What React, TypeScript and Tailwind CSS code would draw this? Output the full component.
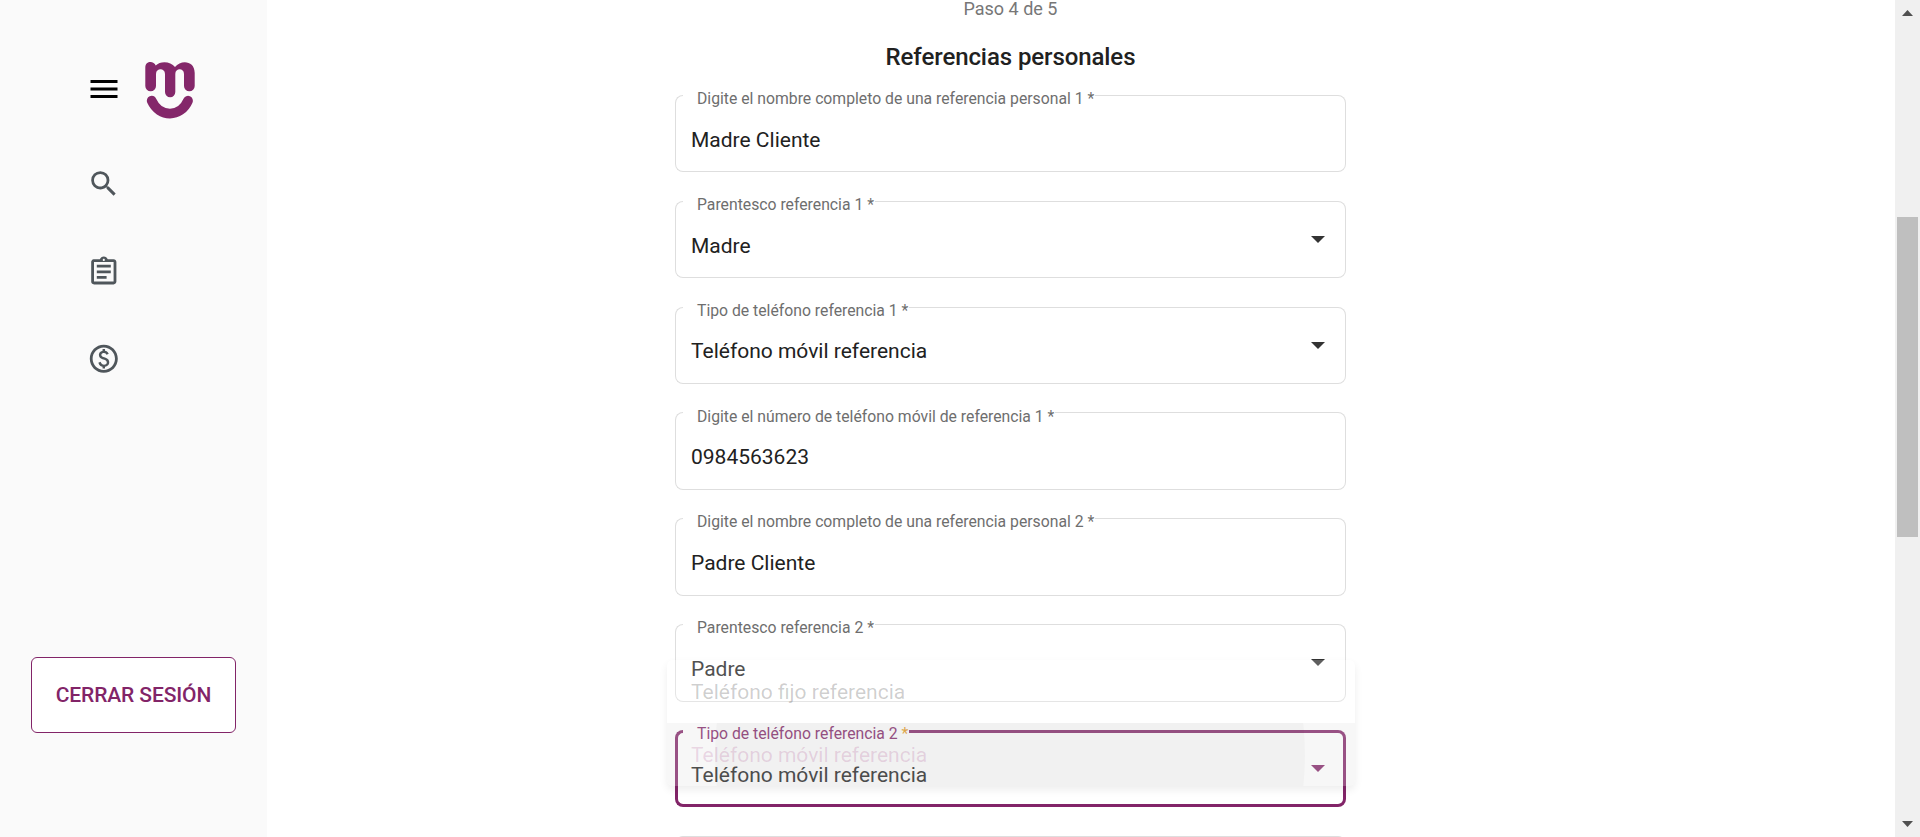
import React from "react";
import { MdMenu, MdSearch, MdOutlineAssignment, MdOutlinePaid } from "react-icons/md";

type FieldProps = {
  label?: string;
  value?: string;
  select?: boolean;
  active?: boolean;
};

function Field({ label, value, select, active }: FieldProps) {
  const line = active ? "border-[#822468]" : "border-[#dedede]";
  return (
    <div className="h-[105.83px] shrink-0">
      <div className="relative flex h-[77.55px] items-center justify-between">
        <div className="absolute inset-0 flex">
          <div className={`w-2 rounded-l-lg border-r-0 ${active ? "border-3" : "border"} ${line}`} />
          {label && (
            <div className={`border-t-0 pr-px pl-[14px] ${active ? "border-b-3" : "border-b"} ${line}`}>
              <span
                className={`relative -top-[7.8px] block text-[15.75px] leading-6 whitespace-nowrap ${active ? "text-[#822468]" : "text-[#6e6e6e]"}`}
              >
                {label}
                <span className={active ? "text-[#e69a18]" : ""}> *</span>
              </span>
            </div>
          )}
          <div className={`flex-1 rounded-r-lg border-l-0 ${active ? "border-3" : "border"} ${line}`} />
        </div>
        <span className="mt-[12.1px] pl-4 text-[21px] leading-6 text-[#212121]">{value}</span>
        {select && (
          <svg
            width="14"
            height="7"
            viewBox="0 0 14 7"
            className={`mr-[21px] ${active ? "fill-[#822468]" : "fill-[#333333]"}`}
          >
            <path d="M0 0h14L7 7z" />
          </svg>
        )}
      </div>
    </div>
  );
}

function Logo() {
  return (
    <svg width="50" height="58" viewBox="0 0 50 58">
      <path
        fill="#84276a"
        d="M.3 6.5C.3-.5 9-.5 10.700 4.500C15-.2 25.500-.2 30 6C36-1.500 49.700-.5 49.700 12V25A5.350 5.350 0 0 1 39 25V13C39 6.800 30.300 6.800 30.300 13V31A5.150 5.150 0 0 1 20 31V13C20 6.800 11 6.800 11 13V25A5.350 5.350 0 0 1 .3 25Z"
      />
      <path
        d="M6.700 39.700C14.500 56.800 35.500 56.800 43 39.700"
        fill="none"
        stroke="#84276a"
        strokeWidth="9.800"
        strokeLinecap="round"
      />
    </svg>
  );
}

export default function App() {
  return (
    <div className="flex h-[837px] w-full overflow-hidden bg-white font-[Roboto,sans-serif]">
      <aside className="flex w-[267px] shrink-0 flex-col bg-[#fafafa]">
        <div className="mt-[61px] flex h-[58px] items-center pl-[86px]">
          <MdMenu size={36} color="#000" className="mb-[2px]" />
          <div className="ml-[23px]">
            <Logo />
          </div>
        </div>
        <nav className="mt-[48.4px] flex flex-col gap-[53.9px] pl-[87px] text-[#4f565b]">
          <MdSearch size={33.6} />
          <MdOutlineAssignment size={33.6} />
          <MdOutlinePaid size={33.6} />
        </nav>
        <button className="mt-auto mb-[104px] ml-[31px] h-[76px] w-[205px] rounded-md border border-[#822468] bg-white pt-[2px] text-[21px] font-medium tracking-[-0.12px] text-[#822468]">
          CERRAR SESIÓN
        </button>
      </aside>
      <main className="flex flex-1 overflow-hidden pl-[408px]">
        <div className="relative flex h-[941.54px] w-[671px] shrink-0 flex-col">
          <p className="mt-[-3px] text-center text-[18px] leading-6 text-[#777]">Paso 4 de 5</p>
          <h1 className="mt-[20px] h-[53.9px] shrink-0 text-center text-2xl font-medium tracking-[-0.09px] text-[#212121]">
            Referencias personales
          </h1>
          <Field label="Digite el nombre completo de una referencia personal 1" value="Madre Cliente" />
          <Field label="Parentesco referencia 1" value="Madre" select />
          <Field label="Tipo de teléfono referencia 1" value="Teléfono móvil referencia" select />
          <Field label="Digite el número de teléfono móvil de referencia 1" value="0984563623" />
          <Field label="Digite el nombre completo de una referencia personal 2" value="Padre Cliente" />
          <Field label="Parentesco referencia 2" value="Padre" select />
          <Field label="Tipo de teléfono referencia 2" value="Teléfono móvil referencia" select active />
          <Field />
          <div className="absolute top-[660px] left-[-8px] h-[126px] w-[688px] overflow-hidden rounded-md bg-white/22 text-[21px] shadow-[0_4px_8px_rgba(0,0,0,0.07)]">
            <div className="flex h-[63px] items-center pt-[2px] pl-6 text-black/20">Teléfono fijo referencia</div>
            <div className="relative flex h-[63px] items-center overflow-hidden bg-black/3 pt-[2px] pl-6">
              <div className="absolute top-[-263px] left-[48px] size-[590px] rounded-full bg-black/[0.025]" />
              <span className="text-[#a0287c]/17">Teléfono móvil referencia</span>
            </div>
          </div>
        </div>
      </main>
      <div className="flex w-[25px] shrink-0 flex-col items-center bg-[#f0f0f0]">
        <svg width="11" height="6" viewBox="0 0 11 6" className="mt-[10px] fill-[#505050]">
          <path d="M0 6h11L5.500 0z" />
        </svg>
        <div className="mt-[201px] h-[320px] w-[21px] bg-[#bfbfbf]" />
        <svg width="11" height="6" viewBox="0 0 11 6" className="mt-auto mb-[10px] fill-[#505050]">
          <path d="M0 0h11L5.500 6z" />
        </svg>
      </div>
    </div>
  );
}
